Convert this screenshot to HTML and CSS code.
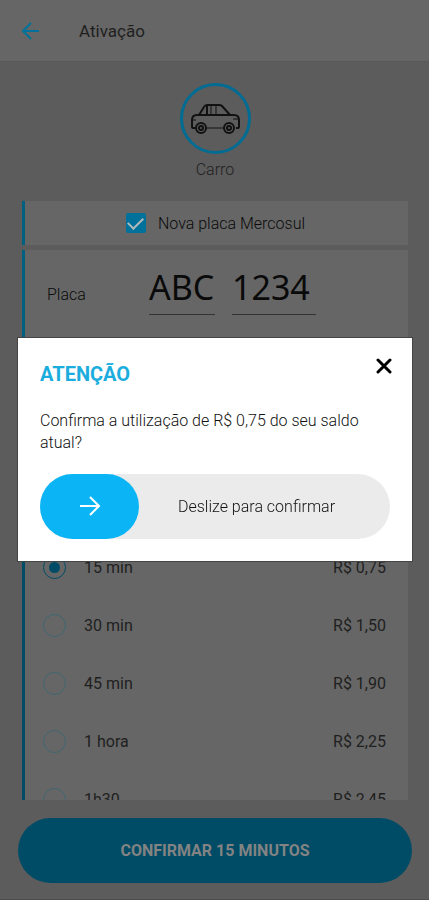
FILE: index.html
```
<!DOCTYPE html>
<html lang="pt-BR">
<head>
<meta charset="UTF-8">
<meta name="viewport" content="width=device-width, initial-scale=1.0">
<title>Ativação</title>
<link rel="stylesheet" href="styles.css">
</head>
<body>
    <div class="app">
        <header class="topbar">
            <button class="back" type="button" aria-label="Voltar">
                <svg width="18" height="18" viewBox="0 0 18 18"><path d="M17 9H1M9 1L1 9l8 8"/></svg>
            </button>
            <h1>Ativação</h1>
        </header>

        <main>
            <!-- Vehicle type -->
            <div class="vehicle">
                <div class="vehicle-circle">
                    <svg width="50" height="32" viewBox="0 0 50 32">
                        <path d="M5 25H3q-1 0-1-1v-7q0-5 5-5h2l5-8q1-2 3-2h12q2 0 3 1l8 9h4q5 0 5 5v7q0 1-1 1h-2M8 12h33M17 3v9"/>
                        <path class="thin" d="M17 25h16M21 3v8M26 3v8M2 17h4M43 16h5"/>
                        <circle cx="11" cy="25" r="5"/><circle cx="11" cy="25" r="2"/>
                        <circle cx="39" cy="25" r="5"/><circle cx="39" cy="25" r="2"/>
                    </svg>
                </div>
                <span>Carro</span>
            </div>

            <div class="card plate-type">
                <input type="checkbox" id="mercosul" checked>
                <label for="mercosul">Nova placa Mercosul</label>
            </div>

            <div class="card plate">
                <label for="letters">Placa</label>
                <input class="letters" type="text" id="letters" value="ABC" maxlength="3">
                <input class="numbers" type="text" value="1234" maxlength="4" aria-label="Números da placa">
            </div>

            <!-- Parking time -->
            <div class="card times">
                <label class="time"><input type="radio" name="time" checked><span>15 min</span><span class="price">R$ 0,75</span></label>
                <label class="time"><input type="radio" name="time"><span>30 min</span><span class="price">R$ 1,50</span></label>
                <label class="time"><input type="radio" name="time"><span>45 min</span><span class="price">R$ 1,90</span></label>
                <label class="time"><input type="radio" name="time"><span>1 hora</span><span class="price">R$ 2,25</span></label>
                <label class="time"><input type="radio" name="time"><span>1h30</span><span class="price">R$ 2,45</span></label>
            </div>
        </main>

        <footer>
            <button class="confirm" type="button">CONFIRMAR 15 MINUTOS</button>
        </footer>
    </div>

    <div class="overlay">
        <div class="modal" role="dialog" aria-labelledby="modal-title">
            <div class="modal-head">
                <h2 id="modal-title">ATENÇÃO</h2>
                <button class="close" type="button" aria-label="Fechar">
                    <svg width="16" height="16" viewBox="0 0 16 16"><path d="M2 2l12 12M14 2L2 14"/></svg>
                </button>
            </div>
            <p>Confirma a utilização de R$ 0,75 do seu saldo atual?</p>
            <div class="slider">
                <button class="handle" type="button" aria-label="Confirmar">
                    <svg width="22" height="22" viewBox="0 0 22 22"><path d="M1 11h19M11 2l9 9-9 9"/></svg>
                </button>
                <span>Deslize para confirmar</span>
            </div>
        </div>
    </div>
</body>
</html>
```
FILE: styles.css
```
* {
    box-sizing: border-box;
}
body {
    margin: 0;
    font-family: Roboto, sans-serif;
    font-size: 16px;
    color: #1f1f1f;
    background-color: #5c5c5c;
}
button {
    border: 0;
    padding: 0;
    background: none;
    font-family: inherit;
    cursor: pointer;
}
svg {
    display: block;
    fill: none;
    stroke: currentColor;
    stroke-width: 2;
}
.app {
    height: 100vh;
    display: flex;
    flex-direction: column;
}
.topbar {
    display: flex;
    align-items: center;
    gap: 39px;
    height: 62px;
    flex-shrink: 0;
    padding: 0 22px;
    background-color: #666;
    border-bottom: 1px solid #585858;
}
.back {
    color: #00719a;
}
h1 {
    margin: 0;
    font-size: 17px;
    font-weight: 400;
}
main {
    flex: 1;
    min-height: 0;
    overflow: hidden;
    display: flex;
    flex-direction: column;
    padding: 21px 21px 0 22px;
}
.vehicle {
    display: flex;
    flex-direction: column;
    align-items: center;
    gap: 7px;
    margin-bottom: 22px;
}
.vehicle-circle {
    width: 71px;
    height: 71px;
    display: flex;
    align-items: center;
    justify-content: center;
    border: 3px solid #006c93;
    border-radius: 50%;
    color: #111;
}
.vehicle-circle .thin {
    stroke-width: 1;
}
.vehicle span {
    font-weight: 300;
    line-height: 18px;
}
.card {
    flex-shrink: 0;
    margin-bottom: 5px;
    background-color: #666;
    border-left: 3px solid #006080;
}
.plate-type {
    display: flex;
    align-items: center;
    justify-content: center;
    gap: 12px;
    height: 44px;
    padding-right: 2px;
}
.plate-type input {
    appearance: none;
    width: 20px;
    height: 20px;
    margin: 0;
    display: grid;
    place-items: center;
    border-radius: 2px;
    background-color: #00719a;
}
.plate-type input:checked::before {
    content: "";
    width: 13px;
    height: 7px;
    margin-bottom: 4px;
    border-left: 2px solid #b0b8bc;
    border-bottom: 2px solid #b0b8bc;
    transform: rotate(-45deg);
}
.plate-type label,
.plate label {
    font-weight: 300;
    color: #0a0a0a;
}
.plate {
    display: flex;
    align-items: center;
    height: 88px;
    padding-left: 22px;
}
.plate label {
    width: 102px;
}
.plate input {
    height: 50px;
    margin: 0 17px 9px 0;
    padding: 0 0 4px;
    border: 0;
    border-bottom: 1px solid #333;
    background: none;
    font-family: "Noto Sans", sans-serif;
    font-size: 34px;
    color: #0a0a0a;
}
.plate .letters {
    width: 66px;
}
.plate .numbers {
    width: 84px;
}
.times {
    flex: 1 0 0;
    min-height: 0;
    margin-bottom: 0;
    overflow: hidden;
    padding-top: 195px;
    border-left-color: #004c66;
}
.time {
    display: flex;
    align-items: center;
    height: 58px;
    padding: 0 22px 0 18px;
}
.time input {
    appearance: none;
    width: 23px;
    height: 23px;
    margin: 0 18px 0 0;
    display: grid;
    place-items: center;
    border: 1px solid #3f6672;
    border-radius: 50%;
}
.time input:checked {
    border-color: #004c66;
}
.time input:checked::before {
    content: "";
    width: 11px;
    height: 11px;
    border-radius: 50%;
    background-color: #004c66;
}
.price {
    margin-left: auto;
}
footer {
    padding: 18px 17px 16px 18px;
    border-bottom: 1px solid #4d4d4d;
}
.confirm {
    display: block;
    width: 100%;
    height: 65px;
    border-radius: 33px;
    background-color: #004c66;
    color: #838383;
    font-size: 16px;
    font-weight: 700;
}
.overlay {
    position: fixed;
    inset: 0;
    display: flex;
    align-items: center;
    padding: 0 17px 2px 18px;
}
.modal {
    width: 100%;
    padding: 20px 22px 22px;
    background-color: #fff;
    outline: 1px solid #444;
}
.modal-head {
    display: flex;
    justify-content: space-between;
    margin-bottom: 20px;
}
.modal h2 {
    margin: 0;
    font-size: 20px;
    line-height: 32px;
    color: #1badde;
}
.close {
    height: 16px;
    margin-right: -2px;
    color: #000;
}
.close svg {
    stroke-width: 3;
    stroke-linecap: round;
}
.modal p {
    margin: 0 0 20px;
    font-weight: 300;
    line-height: 22px;
    color: #111;
}
.slider {
    display: flex;
    align-items: center;
    height: 65px;
    border-radius: 33px;
    background-color: #ebebeb;
    font-weight: 300;
    color: #111;
}
.handle {
    width: 99px;
    height: 65px;
    display: flex;
    align-items: center;
    justify-content: center;
    border-radius: 33px;
    background-color: #0bb5f5;
    color: #fff;
}
.slider span {
    flex: 1;
    padding-right: 16px;
    text-align: center;
}
```
